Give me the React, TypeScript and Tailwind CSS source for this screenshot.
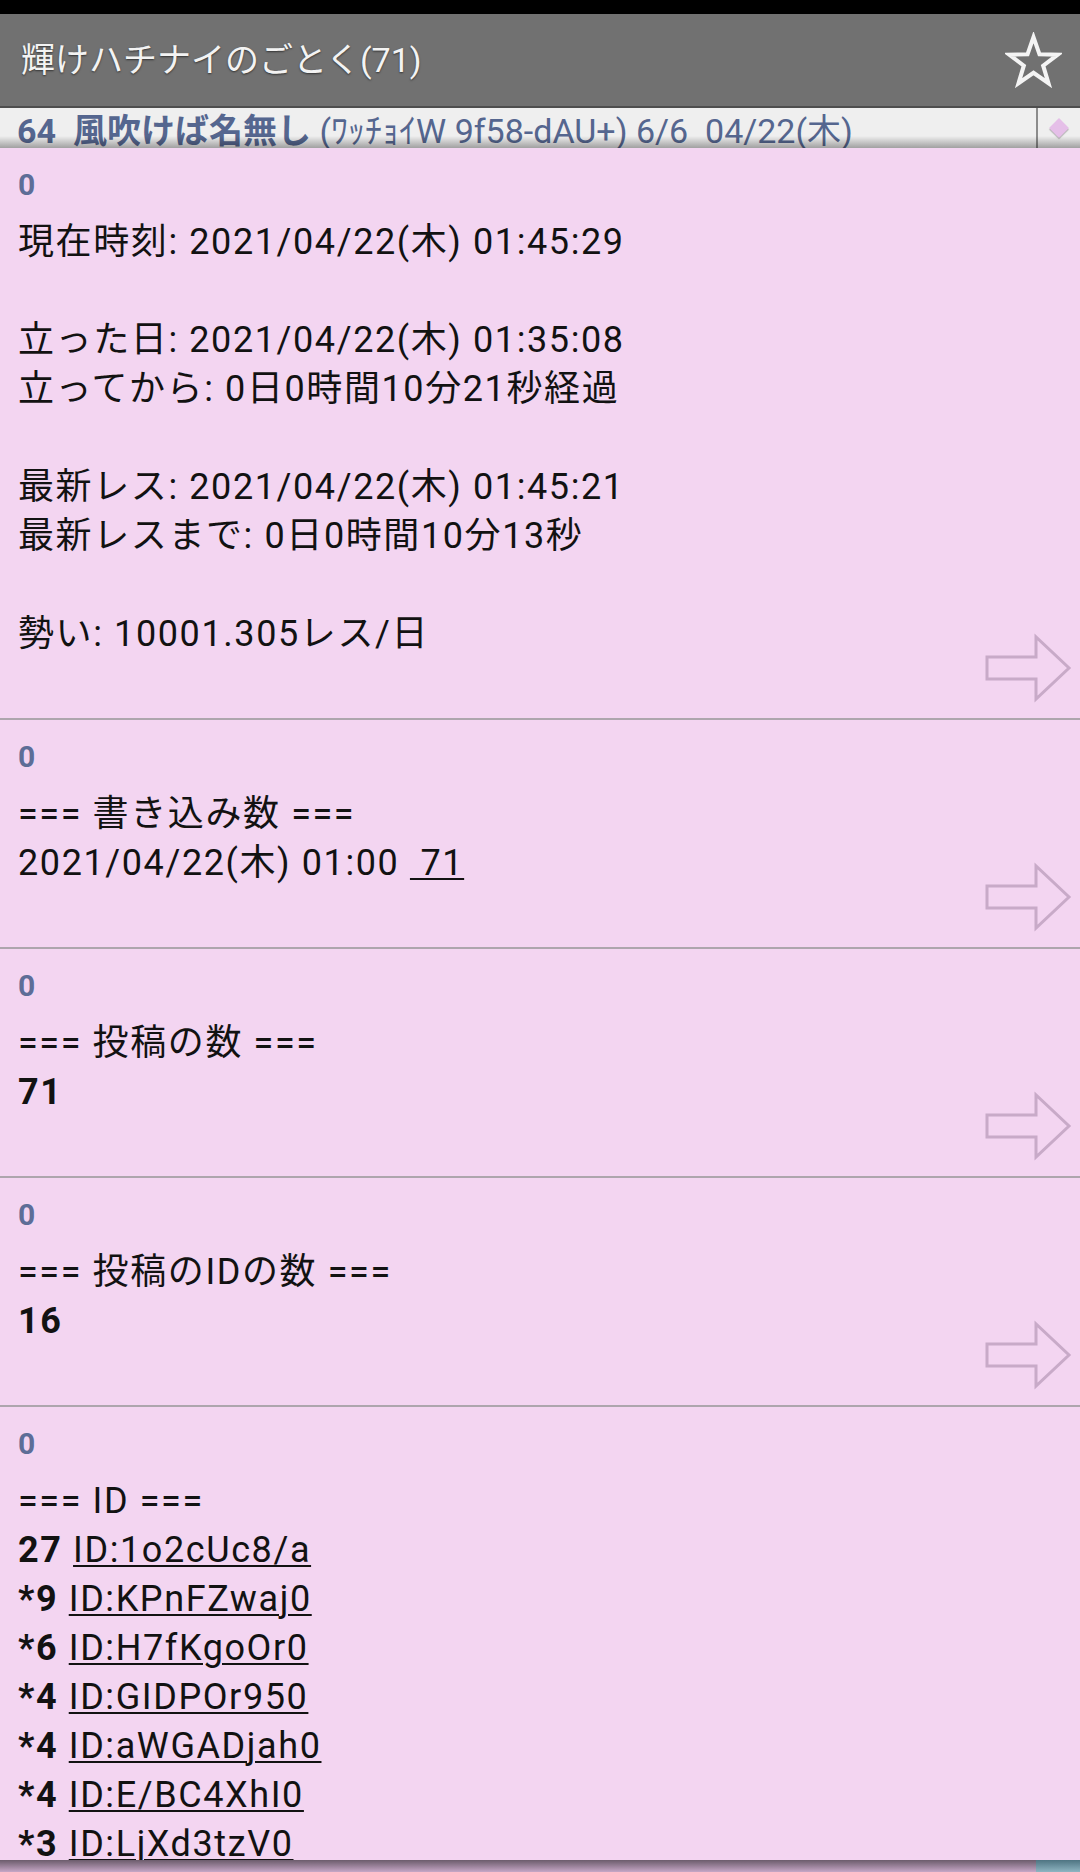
import React from "react";

const Arrow = () => (
  <svg width="90" height="70" viewBox="-2 -2 90 70" className="absolute bottom-[15px] right-[7px]">
    <path d="M2 22 H51 V2 L84 33 L51 64 V44 H2 Z" fill="none" stroke="#c8aac8" strokeWidth="3" strokeLinejoin="miter" />
  </svg>
);

const Star = () => (
  <svg width="57" height="57" viewBox="-2 -2 56 56">
    <polygon
      points="26,3 31.88,19.91 49.78,20.27 35.51,31.09 40.69,48.23 26,38 11.31,48.23 16.49,31.09 2.22,20.27 20.12,19.91"
      fill="none"
      stroke="#f4f4f4"
      strokeWidth="4"
      strokeLinejoin="miter"
    />
  </svg>
);

const U = ({ children }: { children: React.ReactNode }) => (
  <span className="underline decoration-2 underline-offset-[3px]">{children}</span>
);

const Post = ({ lines }: { lines: React.ReactNode[] }) => (
  <div className="relative border-b-2 border-[#ada5ad] pt-[14px] pb-[59px] pl-[18px]">
    <div className="text-[30px] leading-[46px] font-bold text-[#5d6d97]">0</div>
    <div className="mt-[10px] text-[36px] leading-[49px] tracking-[1.6px] text-[#121212]">
      {lines.map((l, i) => (
        <div key={i} className="h-[49px] whitespace-pre">
          {l}
        </div>
      ))}
    </div>
    <Arrow />
  </div>
);

export default function App() {
  const ids: [string, string][] = [
    ["27", "ID:1o2cUc8/a"],
    ["*9", "ID:KPnFZwaj0"],
    ["*6", "ID:H7fKgoOr0"],
    ["*4", "ID:GIDPOr950"],
    ["*4", "ID:aWGADjah0"],
    ["*4", "ID:E/BC4XhI0"],
    ["*3", "ID:LjXd3tzV0"],
    ["*3", "ID:Qw8sLm2k0"],
  ];
  return (
    <div className="w-[1080px] h-[1872px] flex flex-col overflow-hidden font-['Roboto','Noto_Sans_CJK_JP',sans-serif]">
      <div className="h-[14px] bg-black shrink-0" />
      <header className="h-[92px] shrink-0 bg-[#717171] flex items-center justify-between pl-[21px] pr-[18px]">
        <div className="text-[34px] text-[#f3f3f3] [text-shadow:0_1px_2px_rgba(0,0,0,0.55)]">
          輝けハチナイのごとく(71)
        </div>
        <Star />
      </header>
      <div className="h-[2px] shrink-0 bg-[#4e4e4e]" />
      <div className="h-[40px] shrink-0 bg-[#efefef] flex relative overflow-hidden">
        <div className="flex-1 pl-[17px] pt-[6px] text-[34px] leading-[34px] text-[#55668f] whitespace-nowrap overflow-hidden">
          <span className="font-bold">64</span>
          <span className="font-bold ml-[17px]">風吹けば名無し</span>
          <span> (ﾜｯﾁｮｲW 9f58-dAU+) 6/6&nbsp;&nbsp;04/22(木)</span>
        </div>
        <div className="w-[2px] bg-[#8c8c8c]" />
        <div className="w-[42px] flex items-center justify-center">
          <div className="w-[14px] h-[14px] rotate-45 bg-[#e5bfe8] shadow-[1px_1px_1px_rgba(0,0,0,0.25)]" />
        </div>
        <div className="absolute inset-x-0 bottom-0 h-[12px] bg-gradient-to-b from-transparent to-[rgba(0,0,0,0.33)]" />
      </div>
      <main className="flex-1 overflow-hidden bg-[#f3d5f1]">
        <Post
          lines={[
            "現在時刻: 2021/04/22(木) 01:45:29",
            "",
            "立った日: 2021/04/22(木) 01:35:08",
            "立ってから: 0日0時間10分21秒経過",
            "",
            "最新レス: 2021/04/22(木) 01:45:21",
            "最新レスまで: 0日0時間10分13秒",
            "",
            "勢い: 10001.305レス/日",
          ]}
        />
        <Post
          lines={[
            "=== 書き込み数 ===",
            <>
              2021/04/22(木) 01:00 <U> 71</U>
            </>,
          ]}
        />
        <Post lines={["=== 投稿の数 ===", <span className="font-bold">71</span>]} />
        <Post lines={["=== 投稿のIDの数 ===", <span className="font-bold">16</span>]} />
        <Post
          lines={[
            "=== ID ===",
            ...ids.map(([n, id]) => (
              <>
                <span className="font-bold">{n}</span> <U>{id}</U>
              </>
            )),
          ]}
        />
      </main>
      <div className="h-[12px] shrink-0 flex">
        <div className="flex-1 bg-gradient-to-b from-[#6c5c6c] to-[#c7a7c7]" />
        <div className="w-[44px] bg-gradient-to-b from-[#4e7482] to-[#8fb5c2]" />
      </div>
    </div>
  );
}
